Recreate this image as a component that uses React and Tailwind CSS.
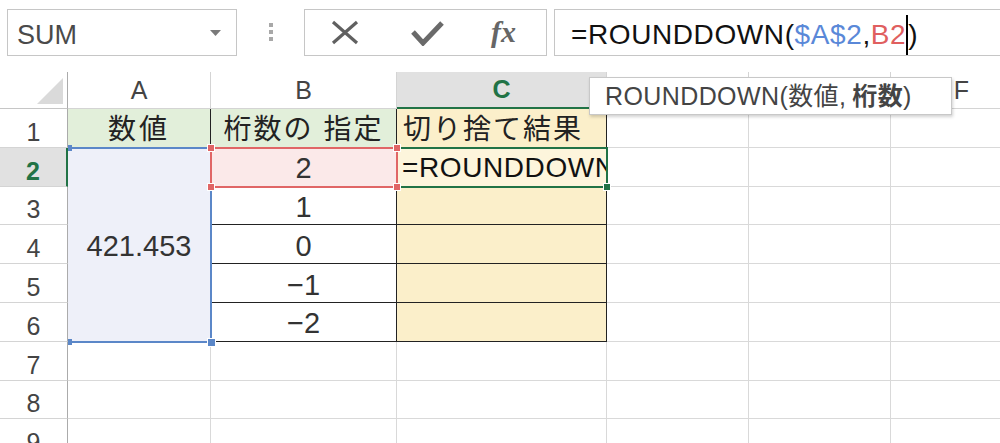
import React from 'react';

const font = "font-['Liberation_Sans','Noto_Sans_CJK_JP',sans-serif]";

function Toolbar() {
  return (
    <div className="h-[72px] flex items-start pt-[9px] pl-[7px] whitespace-nowrap">
      {/* Name box */}
      <div className="shrink-0 w-[230px] h-[47px] border border-[#c6c6c6] flex items-center justify-between pl-[9px] pr-[15px]">
        <span className="text-[27px] leading-none text-[#4a4a4a] pt-[5px]">SUM</span>
        <svg width="11" height="6" viewBox="0 0 11 6">
          <path d="M0 0h11L5.5 6z" fill="#7a7a7a" />
        </svg>
      </div>

      {/* grip */}
      <div className="shrink-0 ml-[32px] mt-[14px] flex flex-col gap-[3px]">
        <span className="w-[4px] h-[4px] bg-[#a8a8a8]" />
        <span className="w-[4px] h-[4px] bg-[#a8a8a8]" />
        <span className="w-[4px] h-[4px] bg-[#a8a8a8]" />
      </div>

      {/* cancel / enter / fx */}
      <div className="shrink-0 ml-[31px] w-[243px] h-[47px] border border-[#c6c6c6] flex items-center pl-[26px]">
        <svg width="28" height="25" viewBox="0 0 28 25">
          <path d="M2 2L26 23M26 2L2 23" stroke="#606060" strokeWidth="3.2" fill="none" />
        </svg>
        <svg className="ml-[52px]" width="33" height="26" viewBox="0 0 33 26">
          <path d="M2 12L12 23L31 3" stroke="#6a6a6a" strokeWidth="5" fill="none" strokeLinejoin="miter" />
        </svg>
        <span className="ml-[47px] font-['Liberation_Serif',serif] italic font-bold text-[30px] leading-none text-[#666] pb-[2px]">
          fx
        </span>
      </div>

      {/* formula */}
      <div className="shrink-0 ml-[7px] w-[470px] h-[47px] border border-[#c6c6c6] flex items-center pl-[16px]">
        <span className="text-[28px] leading-none pt-[4px] text-[#111] tracking-[0.6px]">
          =ROUNDDOWN(<span className="text-[#5a88d8]">$A$2</span>,<span className="text-[#e05f5f]">B2</span>
          <span className="inline-block w-[2px] h-[40px] bg-black align-[-11px]" />)
        </span>
      </div>
    </div>
  );
}

const GRID =
  'grid grid-cols-[68px_143px_186px_210px_142px_142px_142px] grid-rows-[37px_repeat(9,38.8px)] w-[1033px]';

function ColHead({ label, active }) {
  if (active) {
    return (
      <div className="flex items-center justify-center bg-[#e1e1e1] border-r border-r-[#d4d4d4] border-b-2 border-b-[#217346] text-[25px] leading-none font-bold text-[#217346]">
        {label}
      </div>
    );
  }
  return (
    <div className="flex items-center justify-center border-r border-b border-[#d4d4d4] text-[25px] leading-none text-[#444]">
      {label}
    </div>
  );
}

function RowHead({ n }) {
  if (n === 2) {
    return (
      <div className="flex items-center justify-center pt-[9px] bg-[#e1e1e1] border-b border-b-[#d4d4d4] border-r-2 border-r-[#217346] text-[25px] leading-none font-bold text-[#217346]">
        {n}
      </div>
    );
  }
  return (
    <div className="flex items-center justify-center pt-[9px] border-b border-b-[#d4d4d4] border-r border-r-[#ababab] text-[25px] leading-none text-[#444]">
      {n}
    </div>
  );
}

const Empty = () => <div className="border-r border-b border-[#d9d9d9]" />;

const numbers = ['1', '0', '−1', '−2'];

function Sheet() {
  return (
    <div className="relative h-[371px] overflow-hidden">
      <div className={GRID}>
        {/* column headers (D and E sit under the tooltip) */}
        <div className="relative border-r border-r-[#ababab] border-b border-b-[#c6c6c6]">
          <svg className="absolute left-[37px] top-[6px]" width="26" height="26" viewBox="0 0 26 26">
            <path d="M26 0V26H0z" fill="#dadada" />
          </svg>
        </div>
        <ColHead label="A" />
        <ColHead label="B" />
        <ColHead label="C" active />
        <ColHead label="" />
        <ColHead label="" />
        <ColHead label="F" />

        {/* row 1 */}
        <RowHead n={1} />
        <div className="flex items-center justify-center pt-[4px] bg-[#e2efda] border-r border-b border-[#222] text-[28px] leading-none tracking-[3px] text-[#222]">
          数値
        </div>
        <div className="flex items-center justify-center pt-[4px] bg-[#e2efda] border-r border-b border-[#222] text-[28px] leading-none tracking-[2px] text-[#222]">
          桁数の 指定
        </div>
        <div className="flex items-center pl-[6px] pt-[4px] bg-[#fbefca] border-r border-b border-[#222] text-[28px] leading-none tracking-[2px] text-[#222]">
          切り捨て結果
        </div>
        <Empty />
        <Empty />
        <Empty />

        {/* row 2 */}
        <RowHead n={2} />
        <div className="row-span-5 flex items-center justify-center pt-[4px] bg-[#eef0f9] border-r border-b border-[#222] text-[29px] leading-none text-[#333]">
          421.453
        </div>
        <div className="flex items-center justify-center pt-[4px] bg-[#fbe9e9] border-r border-b border-[#222] text-[29px] leading-none text-[#333]">
          2
        </div>
        <div className="flex items-center pl-[5px] pt-[3px] overflow-hidden whitespace-nowrap bg-[#fdf5dc] border-r border-b border-[#222] text-[28px] leading-none tracking-[0.6px] text-[#111]">
          =ROUNDDOWN
        </div>
        <Empty />
        <Empty />
        <Empty />

        {/* rows 3-6 */}
        {numbers.map((v, i) => (
          <React.Fragment key={v}>
            <RowHead n={i + 3} />
            <div className="flex items-center justify-center pt-[4px] bg-white border-r border-b border-[#222] text-[29px] leading-none text-[#333]">
              {v}
            </div>
            <div className="bg-[#fbefca] border-r border-b border-[#222]" />
            <Empty />
            <Empty />
            <Empty />
          </React.Fragment>
        ))}

        {/* rows 7-9 */}
        {[7, 8, 9].map((n) => (
          <React.Fragment key={n}>
            <RowHead n={n} />
            <Empty />
            <Empty />
            <Empty />
            <Empty />
            <Empty />
            <Empty />
          </React.Fragment>
        ))}
      </div>

      {/* selection highlights */}
      <div className={`absolute top-0 left-0 pointer-events-none ${GRID}`}>
        <div className="col-start-2 row-start-3 row-span-5 relative -mt-px -mb-px -mr-px border-t-2 border-r-2 border-b-2 border-[#5b87c8]">
          <span className="absolute left-0 -top-[4px] w-[4px] h-[6px] bg-[#5b87c8]" />
          <span className="absolute left-0 -bottom-[4px] w-[4px] h-[6px] bg-[#5b87c8]" />
          <span className="absolute -right-[6px] -bottom-[6px] w-[9px] h-[9px] bg-[#5b87c8] border border-white" />
        </div>
        <div className="col-start-4 row-start-3 relative -m-px border-2 border-[#217346]">
          <span className="absolute -right-[5px] -bottom-[5px] w-[8px] h-[8px] bg-[#217346] border border-white" />
        </div>
        <div className="col-start-3 row-start-3 relative -m-px border-2 border-[#e06666]">
          <span className="absolute -left-[5px] -top-[5px] w-[8px] h-[8px] bg-[#e06666] border border-white" />
          <span className="absolute -right-[5px] -top-[5px] w-[8px] h-[8px] bg-[#e06666] border border-white" />
          <span className="absolute -left-[5px] -bottom-[5px] w-[8px] h-[8px] bg-[#e06666] border border-white" />
          <span className="absolute -right-[5px] -bottom-[5px] w-[8px] h-[8px] bg-[#e06666] border border-white" />
        </div>
      </div>

      {/* function tooltip */}
      <div className="absolute left-[589px] top-[5px] w-[363px] h-[38px] bg-white border border-[#c8c8c8] shadow-[1px_2px_3px_rgba(0,0,0,0.18)] flex items-center pl-[15px] text-[25px] leading-none tracking-[0.4px] text-[#444] whitespace-nowrap">
        ROUNDDOWN(数値,{' '}
        <span className="ml-[6px] font-bold">桁数</span>)
      </div>
    </div>
  );
}

export default function App() {
  return (
    <div className={`w-[1000px] h-[443px] overflow-hidden bg-white ${font}`}>
      <Toolbar />
      <Sheet />
    </div>
  );
}
